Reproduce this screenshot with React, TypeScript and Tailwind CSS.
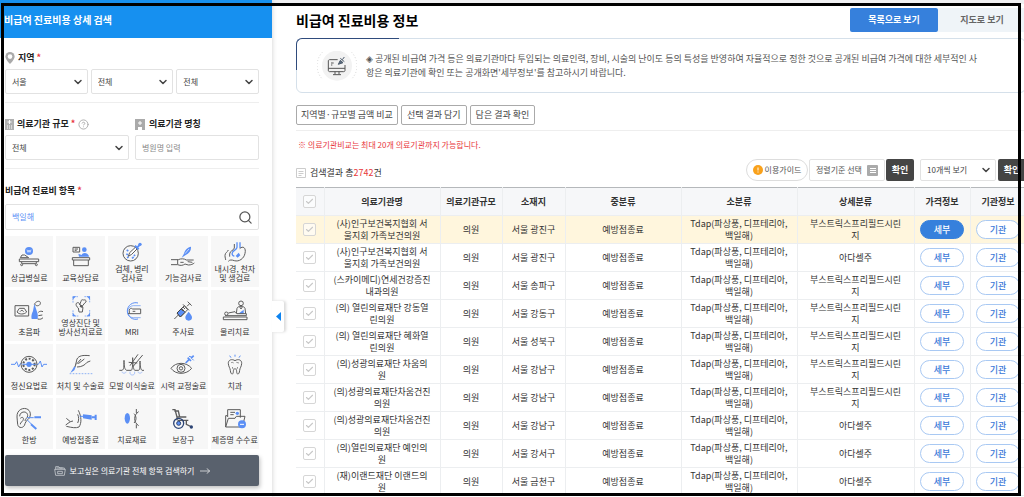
import { ReactNode } from "react";
import { Check, ChevronDown, CircleHelp, Search } from "lucide-react";
import clsx from "clsx";

const BLUE = "#5b8ff5";

interface Category {
  label: string[];
  icon: ReactNode;
}

const categories: Category[] = [
  {
    label: ["상급병실료"],
    icon: (
      <>
        <circle cx="60" cy="12" r="12" fill={BLUE} stroke="none" />
        <path d="M54 8l3 8 3-7 3 7 3-8" stroke="#fff" strokeWidth="2" />
        <path d="M34 32l5-8 8 0 12 8z" />
        <path d="M31 36h58v8H31zM36 44l5 6h38l5-6" />
        <circle cx="38" cy="53" r="3" />
        <circle cx="82" cy="53" r="3" />
      </>
    )
  },
  {
    label: ["교육상담료"],
    icon: (
      <>
        <path d="M36 1h20v14H36zM41 6h10M41 10h6" />
        <circle cx="70" cy="8" r="7" fill={BLUE} stroke="none" />
        <path d="M52 20l10 4c2-9 20-9 22 5H54z" fill={BLUE} stroke="none" />
        <path d="M34 32h52v7H34zM38 39v17h44V39" />
      </>
    )
  },
  {
    label: ["검체, 병리", "검사료"],
    icon: (
      <>
        <circle cx="56" cy="34" r="23" />
        <path d="M44 24l5 3M43 36l5 2M45 47l5-2M60 49l5-4M66 38l3 4" stroke={BLUE} strokeWidth="5" />
        <path d="M49 43l4-11 17-16 5 5-16 16z" fill="#fff" />
        <path d="M69 11l11 11M75 17l9-9" stroke={BLUE} strokeWidth="6" />
        <circle cx="84" cy="7" r="5" fill={BLUE} stroke="none" />
      </>
    )
  },
  {
    label: ["기능검사료"],
    icon: (
      <>
        <path d="M56 32l6-10c4-14 12-21 22-23 1 12-5 20-17 26z" fill={BLUE} stroke="none" />
        <path d="M66 20l12-14" stroke="#fff" strokeWidth="2" />
        <path d="M24 38h22c8-4 18-3 24 1h22M24 53h20c10 4 16 2 22-2l10 3c8 0 14-3 18-6M52 46h10M74 44l14 2" />
        <path d="M44 38v14" />
      </>
    )
  },
  {
    label: ["내시경, 천자", "및 생검료"],
    icon: (
      <>
        <path d="M66 1v15c0 8-12 8-14 16-2 6 2 10 6 10M75 1v17" stroke={BLUE} strokeWidth="4" />
        <path d="M74 20c10-10 20-2 16 14-3 16-18 26-32 22-8-3-14-3-18 2M58 6v12c-2 8-14 8-14 18v8M40 24c-2 6-10 8-10 16 0 8 2 10 2 14" />
        <path d="M62 42l9-10 5 8-8 7z" fill={BLUE} stroke="none" />
      </>
    )
  },
  {
    label: ["초음파"],
    icon: (
      <>
        <path d="M18 14h41v31H18z" />
        <path d="M31 22h15l7 11c-8 8-22 8-29 0zM33 32c3-5 8-5 11 0" />
        <path d="M76 8l8 24c4 10 2 20 2 22H68c-2-8 0-16 4-24z" fill={BLUE} stroke="none" />
        <path d="M76 10c6-12 20-12 18-2-2 8-14 8-16 2M88 34c4-4 10-4 14-2M88 44l12-2M86 54c8 2 12 0 16-4" />
      </>
    )
  },
  {
    label: ["영상진단 및", "방사선치료료"],
    icon: (
      <>
        <path d="M36 20V2h16M70 2h16v18M86 42v18H70M52 60H36V42" stroke={BLUE} strokeDasharray="5 2" strokeWidth="2" />
        <path d="M35 11l10-10H35zM87 11L77 1h10zM35 51l10 10H35zM87 51L77 61h10z" fill={BLUE} stroke="none" />
        <path d="M68 12c8-2 10 6 4 8l-8 10-8-4 4-10c0-4 4-6 8-4zM46 22c4-4 10-2 10 4l10 8-2 14H54l-2-12c-6-4-8-10-6-14z" />
        <path d="M57 30l8 4" strokeWidth="5" />
      </>
    )
  },
  {
    label: ["MRI"],
    icon: (
      <>
        <path d="M78 6A25 25 0 1 0 78 54" stroke={BLUE} />
        <path d="M86 14H64A17 18 0 1 0 64 50h22" stroke={BLUE} strokeWidth="2" />
        <path d="M48 38h38V24H62c-4-4-10-2-10 4v10M62 31h8" />
      </>
    )
  },
  {
    label: ["주사료"],
    icon: (
      <>
        <path d="M74 2l12 12M80 8l-8 8M60 10l18 18" />
        <path d="M64 14L42 36l10 12 22-22z" />
        <path d="M56 22L42 36l10 12 14-14z" fill={BLUE} stroke="#444" />
        <path d="M46 42L34 54M60 18l6 6M54 24l6 6" />
        <path d="M77 32c6 8 10 12 10 17a10 10 0 0 1-20 0c0-5 4-9 10-17z" fill={BLUE} stroke="none" />
      </>
    )
  },
  {
    label: ["물리치료"],
    icon: (
      <>
        <circle cx="78" cy="7" r="7" />
        <path d="M64 38l2-16c2-8 22-8 24 0l2 16M74 18l4 6 4-6" />
        <path d="M70 38l16-12v12z" fill={BLUE} stroke="none" />
        <circle cx="34" cy="38" r="5" />
        <path d="M40 36l20-4 6 6h28v6H30M25 48h71v8H25z" />
      </>
    )
  },
  {
    label: ["정신요법료"],
    icon: (
      <>
        <path d="M6 28h12l5-8 6 16 5-10h4M82 28h6l6-10 5 18 5-8h10" stroke={BLUE} />
        <circle cx="60" cy="28" r="24" />
        <circle cx="60" cy="28" r="17" strokeDasharray="6 5" strokeWidth="6" />
        <path d="M40 28h40" stroke={BLUE} />
        <circle cx="60" cy="28" r="8" fill={BLUE} stroke="none" />
      </>
    )
  },
  {
    label: ["처치 및 수술료"],
    icon: (
      <>
        <path d="M40 34L28 54l12-8 4-10z" fill={BLUE} stroke="none" />
        <path d="M42 36L48 12c6-10 16-12 38-10M46 28l14-16M48 36c14 0 24-6 30-14l10-4M52 26l18-14" />
        <path d="M26 56h68" stroke={BLUE} strokeDasharray="5 4" strokeWidth="2" />
      </>
    )
  },
  {
    label: ["모발 이식술료"],
    icon: (
      <>
        <path d="M22 46h8c6-2 6-12 6-30 0 18 2 28 8 30h14c4-4 4-16 4-38 0 22 2 34 6 38h12c4-2 4-14 4-28 0 14 2 26 6 28h6" />
        <path d="M54 32L78-2M62 36L92 0M50 22l26 2" />
        <path d="M54 50v4c0 8 14 8 14 0v-4M30 50c0 6 12 6 12 0M78 50c0 6 12 6 12 0" stroke="#a9c4fb" />
      </>
    )
  },
  {
    label: ["시력 교정술료"],
    icon: (
      <>
        <path d="M24 40c14-20 46-20 62 0-16 20-48 20-62 0z" />
        <circle cx="54" cy="40" r="12" />
        <circle cx="54" cy="40" r="5" />
        <path d="M68 24l10-10M74 8l10 10M84 10l8-8" stroke={BLUE} strokeWidth="5" />
        <path d="M78 4l8 2M92 16l-4-4" stroke={BLUE} />
      </>
    )
  },
  {
    label: ["치과"],
    icon: (
      <>
        <path d="M44 2l4 6M60-1v6M76 2l-4 6" stroke={BLUE} />
        <path d="M60 17c-9-6-21-3-20 9 1 10 5 12 6 20 1 14 9 14 9 4 0-12 10-12 10 0 0 10 8 10 9-4 1-8 5-10 6-20 1-12-11-15-20-9z" />
        <path d="M48 24c2-3 6-2 8 0M64 22l8 2M52 36l2 6M68 36l-2 6" strokeWidth="2" />
      </>
    )
  },
  {
    label: ["한방"],
    icon: (
      <>
        <path d="M24 24C22-8 66-10 64 18c0 14-14 14-16 26-2 14-20 16-22 2 0-6-2-14-2-22z" />
        <path d="M32 22c0-16 24-18 24-2 0 8-8 8-8 16M34 28c6-6 12-2 8 6s-8 4-8 12" />
        <path d="M54 26h20M54 32l14 14" stroke={BLUE} />
        <path d="M76 25h20M66 46l16 14" stroke={BLUE} strokeWidth="6" />
      </>
    )
  },
  {
    label: ["예방접종료"],
    icon: (
      <>
        <path d="M16 28l12 10 8-2M28 38l-14 10M16 52c18 4 28 6 38 2 8-12 8-30-2-50" />
        <path d="M50 16c4 8 4 18 0 26" />
        <path d="M56 22h12" stroke={BLUE} />
        <path d="M66 16l26 3v13l-26-4z" fill={BLUE} stroke="none" />
        <path d="M92 25h12M104 17v16" stroke={BLUE} strokeWidth="6" />
      </>
    )
  },
  {
    label: ["치료재료"],
    icon: (
      <>
        <ellipse cx="46" cy="28" rx="8" ry="16" fill={BLUE} stroke="none" />
        <path d="M80 8c-16 10-16 32 0 42M73 0v12M73 46v12M66 14c8 8 8 20 0 28" />
      </>
    )
  },
  {
    label: ["보장구"],
    icon: (
      <>
        <path d="M28 2h8l6 22h28M34 6h12l4 18M44 34h26v12l16 8M42 24v10M56 34h20" strokeWidth="4" />
        <circle cx="47" cy="43" r="15" stroke="#2c4474" strokeWidth="4" />
        <circle cx="47" cy="43" r="6" fill={BLUE} stroke="#2c4474" />
        <circle cx="85" cy="54" r="5" fill="#2c4474" stroke="none" />
      </>
    )
  },
  {
    label: ["제증명 수수료"],
    icon: (
      <>
        <path d="M38 24V2h38v24M46 10h14M46 17h10" />
        <path d="M32 54V20h6M32 54l8-26h20l4-6h26l-8 32z" />
        <circle cx="67" cy="13" r="5" fill={BLUE} stroke="none" />
        <circle cx="81" cy="46" r="12" fill={BLUE} stroke="none" />
        <path d="M75 46h12" stroke="#fff" />
      </>
    )
  }
];

const TDAP = "Tdap(파상풍, 디프테리아,\n백일해)";
const BOOSTRIX = "부스트릭스프리필드시린\n지";
const ADACEL = "아다셀주";

const rows = [
  { name: "(사)인구보건복지협회 서\n울지회 가족보건의원", area: "서울 광진구", detail: BOOSTRIX },
  { name: "(사)인구보건복지협회 서\n울지회 가족보건의원", area: "서울 광진구", detail: ADACEL },
  { name: "(스카이메디)연세건강증진\n내과의원", area: "서울 송파구", detail: BOOSTRIX },
  { name: "(의) 열린의료재단 강동열\n린의원", area: "서울 강동구", detail: BOOSTRIX },
  { name: "(의) 열린의료재단 혜화열\n린의원", area: "서울 성북구", detail: BOOSTRIX },
  { name: "(의)성광의료재단 차움의\n원", area: "서울 강남구", detail: BOOSTRIX },
  { name: "(의)성광의료재단차움건진\n의원", area: "서울 강남구", detail: BOOSTRIX },
  { name: "(의)성광의료재단차움건진\n의원", area: "서울 강남구", detail: ADACEL },
  { name: "(의)열린의료재단 예인의\n원", area: "서울 강서구", detail: ADACEL },
  { name: "(재)이랜드재단 이랜드의\n원", area: "서울 금천구", detail: ADACEL }
];

const columns = [
  { title: "의료기관명", width: "w-[116px]" },
  { title: "의료기관규모", width: "w-[62px]" },
  { title: "소재지", width: "w-[63px]" },
  { title: "중분류", width: "w-[116px]" },
  { title: "소분류", width: "w-[116px]" },
  { title: "상세분류", width: "w-[117px]" },
  { title: "가격정보", width: "w-14" },
  { title: "기관정보", width: "w-14" }
];

function SelectBox({ id, label, value, className }: { id: string; label: string; value: string; className?: string }) {
  return (
    <div className={clsx("grid items-center", className)}>
      <select
        id={id}
        aria-label={label}
        className="[grid-area:1/1] h-full w-full appearance-none rounded-xs border border-[#e2e2e2] bg-white pl-1.5 pr-5 text-[8px] text-[#444]"
      >
        <option>{value}</option>
      </select>
      <ChevronDown className="[grid-area:1/1] mr-1 size-3 justify-self-end text-[#444] pointer-events-none" strokeWidth={3} />
    </div>
  );
}

function CheckBox({ label }: { label: string }) {
  return (
    <label className="inline-grid place-items-center align-middle">
      <input
        type="checkbox"
        aria-label={label}
        className="[grid-area:1/1] size-[13px] appearance-none rounded-xs border border-[#d6d6d6] bg-white/60"
      />
      <Check className="[grid-area:1/1] size-[9px] text-[#c8c8c8]" strokeWidth={3} />
    </label>
  );
}

function Required() {
  return <span className="ml-0.5 text-[#e8373c]">*</span>;
}

function Sidebar() {
  return (
    <aside className="relative z-10 flex w-[272px] shrink-0 flex-col bg-white shadow-[0_0_5px_rgba(0,0,0,0.2)]">
      <h2 className="flex h-[38px] items-center bg-[#1690f0] pl-1 text-[10px] font-bold text-white">
        비급여 진료비용 상세 검색
      </h2>
      <form className="flex flex-col pl-[5px] pr-[13px]">
        <section className="flex flex-col gap-1 border-b border-[#eee] pb-2 pt-[13px]">
          <h3 className="flex h-[14px] items-center text-[9px] font-bold text-[#222]">
            <svg viewBox="0 0 20 26" className="mr-[3px] h-3 w-[10px]">
              <path d="M10 0a10 10 0 0 1 10 10c0 7-10 16-10 16S0 17 0 10A10 10 0 0 1 10 0z" fill="#aaa" />
              <circle cx="10" cy="10" r="5" fill="#fff" />
            </svg>
            지역
            <Required />
          </h3>
          <div className="grid grid-cols-3 gap-[3px]">
            <SelectBox id="sido" label="시도" value="서울" className="h-[25px]" />
            <SelectBox id="sigungu" label="시군구" value="전체" className="h-[25px]" />
            <SelectBox id="dong" label="읍면동" value="전체" className="h-[25px]" />
          </div>
        </section>
        <section className="grid grid-cols-2 gap-1.5 border-b border-[#eee] pb-2 pt-[14px]">
          <div className="flex flex-col gap-1">
            <label htmlFor="scale" className="flex h-[14px] items-center text-[9px] font-bold text-[#222]">
              <svg viewBox="0 0 9 12" className="mr-[3px] h-3 w-[9px]">
                <path d="M0 1h9v11H0z" fill="#b0b0b0" />
                <path d="M4.500 2v4M2.500 4h4M2 8h1M4 8h1M6 8h1M2 10h1M4 10h1M6 10h1" stroke="#fff" />
              </svg>
              의료기관 규모
              <Required />
              <CircleHelp className="ml-[3px] size-[11px] text-[#aaa]" strokeWidth={2} />
            </label>
            <SelectBox id="scale" label="의료기관 규모" value="전체" className="h-[25px]" />
          </div>
          <div className="flex flex-col gap-1">
            <label htmlFor="hospital" className="flex h-[14px] items-center text-[9px] font-bold text-[#222]">
              <svg viewBox="0 0 10 12" className="mr-1 h-3 w-[10px]">
                <path d="M0 1h10v11H7V9H3v3H0z" fill="#aaa" />
                <path d="M5 3v4M3 5h4" stroke="#fff" />
              </svg>
              의료기관 명칭
            </label>
            <input
              id="hospital"
              placeholder="병원명 입력"
              className="h-[25px] w-full rounded-xs border border-[#e2e2e2] px-1.5 text-[8px] placeholder:text-[#888]"
            />
          </div>
        </section>
        <section className="flex flex-col pt-[15px]">
          <label htmlFor="item" className="flex h-[14px] items-center text-[9px] font-bold text-[#222]">
            비급여 진료비 항목
            <Required />
          </label>
          <div className="mt-1.5 flex h-[26px] items-center rounded-xs border border-[#e2e2e2] pl-1.5 pr-[5px]">
            <input id="item" defaultValue="백일해" className="min-w-0 flex-1 text-[8px] text-[#5b8ff5] outline-none" />
            <button type="button" aria-label="검색">
              <Search className="size-[15px] text-[#555]" strokeWidth={2} />
            </button>
          </div>
        </section>
        <div className="mt-1.5 grid grid-cols-5 gap-[3px]">
          {categories.map((c) => (
            <button
              type="button"
              key={c.label[0]}
              className="flex h-[51px] flex-col items-center justify-end bg-[#f7f7f7] pb-[5px] text-[8px] leading-[9px] text-[#333]"
            >
              <svg
                viewBox="0 0 120 66"
                className={clsx("h-[22px] w-10 overflow-visible", c.label.length === 1 && "mb-1")}
                fill="none"
                stroke="#5c5c5c"
                strokeWidth="3"
              >
                {c.icon}
              </svg>
              {c.label.map((line) => (
                <span key={line} className="whitespace-nowrap">
                  {line}
                </span>
              ))}
            </button>
          ))}
        </div>
        <button
          type="submit"
          className="mt-1.5 flex h-[31px] items-center justify-center rounded-xs bg-[#59616d] text-[8px] text-white shadow-[1px_2px_4px_rgba(0,0,0,0.25)]"
        >
          <svg viewBox="0 0 36 30" className="mr-1 h-[10px] w-3" fill="none" stroke="#dfe2e6" strokeWidth="2">
            <path d="M5 10V2h9l3 4h14v4M2 10h32l-3 18H5zM8 6h18M11 16h14v7H11z" />
          </svg>
          보고싶은 의료기관 전체 항목 검색하기
          <svg viewBox="0 0 30 18" className="ml-1.5 h-[6px] w-[10px]" fill="none" stroke="#fff" strokeWidth="2">
            <path d="M0 9h29M20 1l9 8-9 8" />
          </svg>
        </button>
      </form>
      <button
        type="button"
        aria-label="검색창 닫기"
        className="absolute left-full top-[301px] flex h-[31px] w-3 items-center justify-center rounded-r-xs bg-white shadow-[2px_0_3px_rgba(0,0,0,0.15)]"
      >
        <svg viewBox="0 0 5 9" className="h-[9px] w-[5px]">
          <path d="M5 0v9L0 4.500z" fill="#0d83f0" />
        </svg>
      </button>
    </aside>
  );
}

function Notice() {
  return (
    <div className="relative mt-1.5 flex h-[55px] items-center rounded-md border border-[#d5e0ea] pl-5">
      <div className="absolute -left-px -top-px h-8 w-[103px] rounded-tl-md border-l border-t border-[#2f4b7c]" />
      <svg viewBox="0 0 120 90" className="h-[30px] w-10 shrink-0" fill="none" stroke="#555" strokeWidth="3">
        <circle cx="60" cy="44" r="45" fill="#f2f2f2" stroke="none" />
        <path d="M16 4a58 58 0 0 0 0 80M104 4a58 58 0 0 1 0 80" stroke="#d5d5d5" strokeDasharray="3 6" />
        <path d="M62 26H38c-3 0-4 2-4 4v28c0 3 2 4 4 4h42c3 0 4-2 4-4V42M34 52h50M54 62v8M66 62v8M48 71h24M42 36h8M42 42h4" />
        <path d="M64 40l6-12 8 7zM70 22l12 10M76 26l6-8" fill="#5a6b7d" stroke="#4c5a6a" />
      </svg>
      <p className="ml-[9px] whitespace-nowrap text-[9px] leading-[14px] text-[#555]">
        ◈ 공개된 비급여 가격 등은 의료기관마다 투입되는 의료인력, 장비, 시술의 난이도 등의 특성을 반영하여 자율적으로 정한
        것으로 공개된 비급여 가격에 대한 세부적인 사
        <br />
        항은 의료기관에 확인 또는 공개화면'세부정보'를 참고하시기 바랍니다.
      </p>
    </div>
  );
}

function ResultTable() {
  return (
    <table className="mt-1.5 w-full table-fixed border-collapse border-t border-[#b5b8bb] text-center text-[9px] leading-3 text-[#333]">
      <thead>
        <tr className="h-7 bg-[#f6f7f9]">
          <th className="w-7 border-b border-r border-[#eceef0] p-0">
            <CheckBox label="전체 선택" />
          </th>
          {columns.map((c) => (
            <th key={c.title} className={clsx("border-b border-r border-[#eceef0] p-0 font-bold", c.width)}>
              {c.title}
            </th>
          ))}
        </tr>
      </thead>
      <tbody className="[&_td]:border-b [&_td]:border-r [&_td]:border-[#eceef0] [&_td]:p-0">
        {rows.map((r, i) => (
          <tr key={i} className={clsx("h-7", i === 0 && "bg-[#fff6dd]")}>
            <td>
              <CheckBox label={`${i + 1}번 선택`} />
            </td>
            <td className="whitespace-pre-line">{r.name}</td>
            <td>의원</td>
            <td>{r.area}</td>
            <td>예방접종료</td>
            <td className="whitespace-pre-line">{TDAP}</td>
            <td className="whitespace-pre-line">{r.detail}</td>
            <td>
              <button
                className={clsx(
                  "h-[19px] w-11 rounded-full border align-middle font-medium",
                  i === 0 ? "border-[#3680dc] bg-[#3680dc] text-white" : "border-[#a9c9f3] bg-white text-[#3b78d8]"
                )}
              >
                세부
              </button>
            </td>
            <td>
              <button className="h-[19px] w-11 rounded-full border border-[#a9c9f3] bg-white align-middle font-medium text-[#3b78d8]">
                기관
              </button>
            </td>
          </tr>
        ))}
      </tbody>
    </table>
  );
}

export default function App() {
  return (
    <div className="relative flex h-screen overflow-hidden bg-white font-['Noto_Sans_CJK_KR','Noto_Sans',sans-serif]">
      <Sidebar />
      <main className="-mr-[2px] min-w-0 flex-1 border-t-4 border-[#f0f0f2] pl-6">
        <header className="flex items-center justify-between pt-1">
          <h1 className="text-[14px] font-bold leading-6 text-black">비급여 진료비용 정보</h1>
          <div className="flex text-[9px] font-bold">
            <button className="h-6 w-[88px] rounded-xs bg-[#3680dc] text-white">목록으로 보기</button>
            <button className="h-6 w-[88px] bg-[#eff4f8] text-[#666]">지도로 보기</button>
          </div>
        </header>
        <Notice />
        <div className="mt-3 flex gap-[3px] border-b border-[#eee] pb-[5px] text-[9px] text-[#444]">
          <button className="h-5 rounded-xs border border-[#aaa] px-1">지역별·규모별 금액 비교</button>
          <button className="h-5 rounded-xs border border-[#aaa] px-[5px]">선택 결과 담기</button>
          <button className="h-5 rounded-xs border border-[#aaa] px-[5px]">담은 결과 확인</button>
        </div>
        <p className="mt-2 pl-0.5 text-[8px] leading-3 text-[#e8373c]">
          ※ 의료기관비교는 최대 20개 의료기관까지 가능합니다.
        </p>
        <div className="mt-2 flex h-[22px] items-center text-[8px] text-[#555]">
          <p className="flex flex-1 items-center self-end text-[9px] leading-4 text-[#333]">
            <svg viewBox="0 0 10 10" className="mr-1 size-[10px]" fill="none" stroke="#ccc">
              <path d="M.5.5h9v9h-9zM2.500 3.500h5M2.500 5.500h5M2.500 7.500h3" />
            </svg>
            검색결과 총<span className="text-[#e8373c]">2742</span>건
          </p>
          <button className="flex h-[22px] w-[62px] items-center justify-center gap-0.5 rounded-full border border-[#ddd]">
            <svg viewBox="0 0 10 10" className="size-[10px]">
              <circle cx="5" cy="5" r="5" fill="#f9a11b" />
              <path d="M5 2.500v3M5 6.500v1" stroke="#fff" />
            </svg>
            이용가이드
          </button>
          <button className="ml-px flex h-[22px] w-[76px] items-center justify-between rounded-xs border border-[#e2e2e2] px-1.5">
            정렬기준 선택
            <svg viewBox="0 0 11 11" className="size-[11px]">
              <rect width="11" height="11" rx="1" fill="#aaa" />
              <path d="M3 3.500h6M3 5.500h6M3 7.500h6" stroke="#fff" />
            </svg>
          </button>
          <button className="ml-px h-[22px] w-7 rounded-xs bg-[#454545] text-[9px] font-bold text-white">확인</button>
          <SelectBox id="page-size" label="목록 개수" value="10개씩 보기" className="ml-1.5 h-[22px] w-[76px]" />
          <button className="ml-0.5 h-[22px] w-7 rounded-xs bg-[#454545] text-[9px] font-bold text-white">확인</button>
        </div>
        <ResultTable />
      </main>
      <div className="pointer-events-none absolute bottom-px left-px right-[3px] top-[3px] z-20 border-[3px] border-black" />
    </div>
  );
}
